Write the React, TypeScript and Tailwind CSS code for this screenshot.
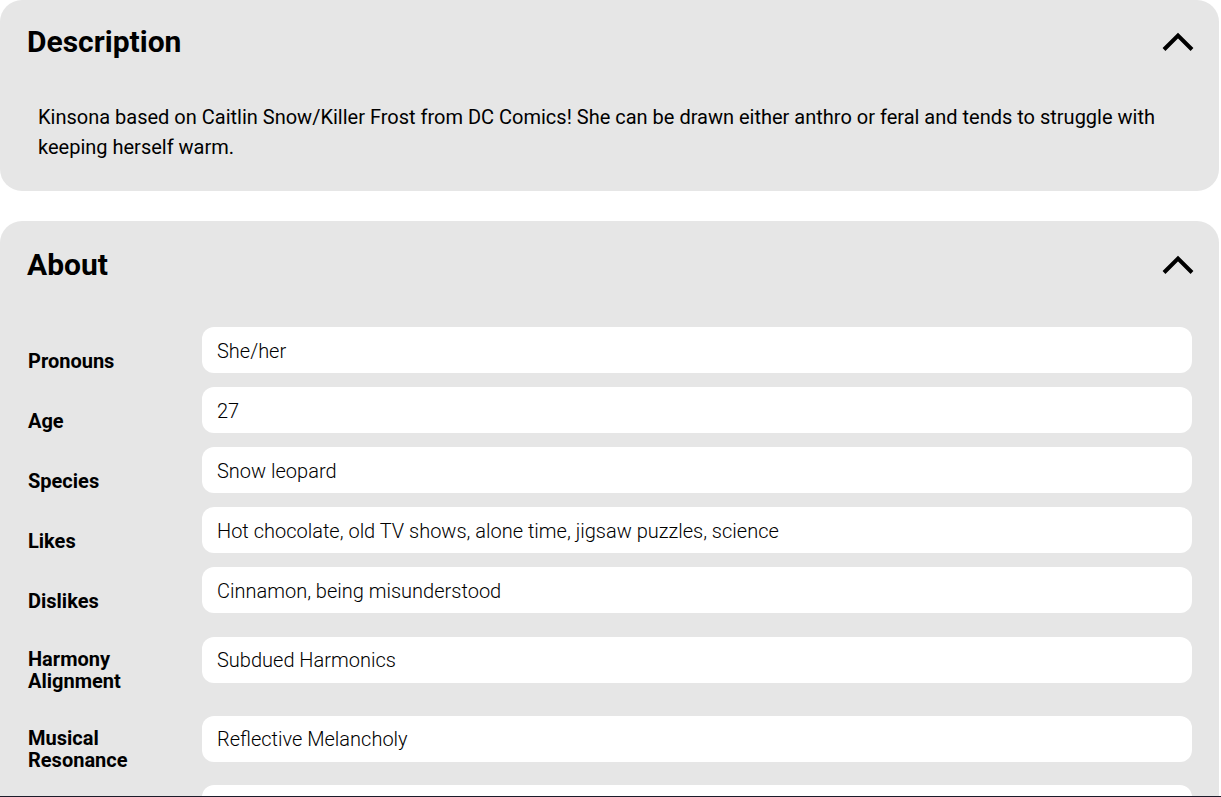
import React from "react";

const Chevron = () => (
  <svg width="32" height="20" viewBox="0 0 32 20" fill="none" className="mr-[-2px] shrink-0">
    <polyline points="2,17.5 16,3.5 30,17.5" stroke="#000" strokeWidth="4" strokeLinecap="butt" strokeLinejoin="miter" />
  </svg>
);

const rows: [string, string][] = [
  ["Pronouns", "She/her"],
  ["Age", "27"],
  ["Species", "Snow leopard"],
  ["Likes", "Hot chocolate, old TV shows, alone time, jigsaw puzzles, science"],
  ["Dislikes", "Cinnamon, being misunderstood"],
  ["Harmony Alignment", "Subdued Harmonics"],
  ["Musical Resonance", "Reflective Melancholy"],
  ["", ""],
];

export default function App() {
  return (
    <div
      className="h-screen overflow-hidden bg-white text-black"
      style={{ fontFamily: "Roboto, 'Liberation Sans', sans-serif" }}
    >
      <div className="mr-[2px] flex flex-col gap-[30px]">
        <section className="rounded-[22px] bg-[#e6e6e6] pl-[27px] pr-[27px] pt-[20px] pb-[29px]">
          <div className="flex items-center justify-between">
            <h2 className="text-[30px] font-bold leading-[44px]">Description</h2>
            <Chevron />
          </div>
          <p className="mt-[38px] px-[11px] text-[20px] leading-[30px] font-normal">
            Kinsona based on Caitlin Snow/Killer Frost from DC Comics! She can be drawn either anthro or feral and tends to struggle with keeping herself warm.
          </p>
        </section>

        <section className="rounded-[22px] bg-[#e6e6e6] pl-[27px] pr-[27px] pt-[22px] pb-[29px]">
          <div className="flex items-center justify-between">
            <h2 className="text-[30px] font-bold leading-[44px]">About</h2>
            <Chevron />
          </div>
          <div className="mt-[40px] grid grid-cols-[150px_1fr] items-center gap-x-[25px] gap-y-[14px]">
            {rows.map(([label, value], i) => (
              <React.Fragment key={i}>
                <div className="min-h-[43px] pt-[21px] pl-px text-[20px] font-bold leading-[22px]">{label}</div>
                <div className="flex h-[46px] items-center rounded-[12px] bg-white px-[15px] pt-px text-[20px] font-light">
                  {value}
                </div>
              </React.Fragment>
            ))}
          </div>
        </section>
      </div>
      <div className="fixed bottom-0 left-0 right-0 h-px bg-[#1c1c2a]" />
    </div>
  );
}
